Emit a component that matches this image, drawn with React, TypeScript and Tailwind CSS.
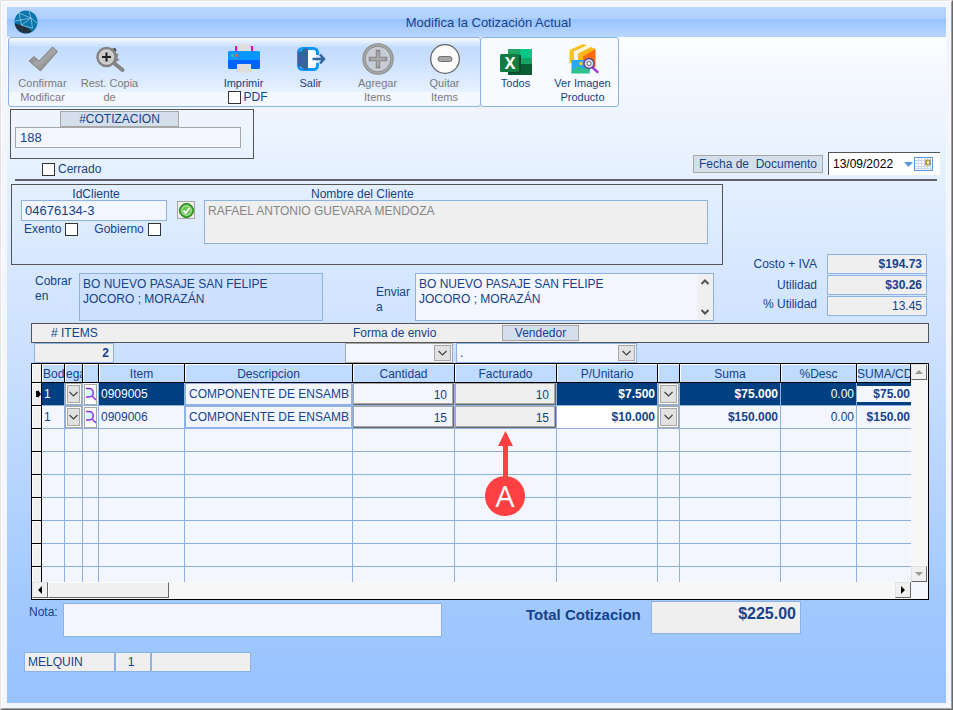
import React from "react";

const field =
  "block rounded-none border border-[#8db2e3] bg-[#f3f6ff] text-[#15428b] outline-none resize-none";
const tag = "border border-[#a7a7a7] bg-[#d5dfec] leading-[14px] text-center";

function Check({ id }: { id: string }) {
  return (
    <input
      id={id}
      type="checkbox"
      className="m-0 size-[13px] shrink-0 appearance-none border border-[#333] bg-white checked:bg-[#15428b]"
    />
  );
}

function DropArrow() {
  return (
    <span className="pointer-events-none absolute inset-y-[2px] right-[2px] flex w-[17px] items-center justify-center border border-[#a7a7a7] bg-[#e1e1e1]">
      <svg width="9" height="6" viewBox="0 0 9 6" fill="none" stroke="#444" strokeWidth="1.2">
        <path d="M.5 1l4 4 4-4" />
      </svg>
    </span>
  );
}

function CellDrop({ label }: { label: string }) {
  return (
    <span className="relative block h-[22px] w-full border border-[#a7a7a7] bg-white">
      <select aria-label={label} className="block size-full appearance-none opacity-0" />
      <span className="pointer-events-none absolute inset-px flex items-center justify-center border border-[#a7a7a7] bg-[#e1e1e1]">
        <svg width="9" height="6" viewBox="0 0 9 6" fill="none" stroke="#444" strokeWidth="1.2">
          <path d="M.5 1l4 4 4-4" />
        </svg>
      </span>
    </span>
  );
}

function Globe() {
  return (
    <svg width="24" height="24" viewBox="0 0 24 24">
      <circle cx="12" cy="12" r="11.5" fill="#0b76ab" />
      <path d="M.7 13.5l6.8 1.7 7 3.2 3.5 3.2A11.5 11.5 0 0 1 .7 13.5z" fill="#26313f" />
      <path
        d="M5 3l12 5L7.500 15.200 5 3M1 11l16-3 6 5M7.500 15.200l11 3L17 8M15 1l2 7"
        fill="none"
        stroke="#8fc3dd"
        strokeWidth=".8"
      />
    </svg>
  );
}

function IconConfirm() {
  return (
    <svg width="32" height="32" viewBox="0 0 32 32">
      <defs>
        <linearGradient id="gc" x1="0" y1="0" x2="1" y2="1">
          <stop offset="0" stopColor="#777" />
          <stop offset=".5" stopColor="#a5a5a5" />
          <stop offset="1" stopColor="#777" />
        </linearGradient>
      </defs>
      <path d="M2 18l5-4.500 5 4.500L25.500 4l5 4.500L13.500 28z" fill="url(#gc)" stroke="#777" strokeWidth=".8" />
    </svg>
  );
}

function IconRestore() {
  return (
    <svg width="32" height="32" viewBox="0 0 32 32">
      <path d="M18 5l3.500 1v4l3 1-1 4 2 2-5 3z" fill="#8b8b8b" />
      <path d="M19.500 5.500l2 1v2" fill="none" stroke="#444" strokeWidth="1.500" />
      <path d="M20.500 20.500l8 6.500" stroke="#858585" strokeWidth="4" strokeLinecap="round" />
      <circle cx="12.500" cy="14" r="9" fill="#d6d6d6" stroke="#838383" strokeWidth="2.500" />
      <circle cx="12.500" cy="14" r="6.500" fill="#c9c9c9" />
      <path d="M12.500 9.500v9M8 14h9" stroke="#222" strokeWidth="2" />
    </svg>
  );
}

function IconPrint() {
  return (
    <svg width="34" height="32" viewBox="0 0 34 32">
      <path d="M8 3h18v9H8z" fill="#ff00c8" />
      <path d="M10 1h11l3 3v8H10z" fill="#dedede" />
      <path d="M2.500 8h29a1.500 1.500 0 0 1 1.500 1.500V17H1V9.500A1.500 1.500 0 0 1 2.500 8z" fill="#0a96ff" />
      <path d="M1 17h32v7.500a1.500 1.500 0 0 1-1.500 1.500h-29A1.500 1.500 0 0 1 1 24.500z" fill="#0064ff" />
      <path d="M10 21h14v9H10z" fill="#dedede" />
      <circle cx="5.500" cy="12.500" r="1.500" fill="#2ec7a0" />
      <circle cx="9.500" cy="12.500" r="1.500" fill="#ff5a3c" />
    </svg>
  );
}

function IconExit() {
  return (
    <svg width="32" height="32" viewBox="0 0 32 32">
      <rect x="3.500" y="5.500" width="19" height="21" rx="4" fill="#fff" stroke="#0a96ff" strokeWidth="3" />
      <path d="M3 9l3-1 3-2.500h4v21H9L6 24l-3-1z" fill="#34669c" />
      <path d="M21 12h4v8h-4z" fill="#d8e8ff" />
      <path d="M17.500 16h11M25 11.500l4 4.500-4 4.500" fill="none" stroke="#34669c" strokeWidth="2.500" />
    </svg>
  );
}

function IconAdd() {
  return (
    <svg width="32" height="32" viewBox="0 0 32 32">
      <circle cx="16" cy="16" r="14" fill="#c6cdd6" stroke="#8d8d8d" strokeWidth="3.500" />
      <circle cx="16" cy="16" r="14" fill="none" stroke="#a9a9a9" strokeWidth="1.500" />
      <path d="M16 9v14M9 16h14" stroke="#868686" strokeWidth="4.500" strokeLinecap="square" />
      <path d="M16 8.500v15M8.500 16h15" stroke="#a9a9a9" strokeWidth="2.500" />
    </svg>
  );
}

function IconRemove() {
  return (
    <svg width="32" height="32" viewBox="0 0 32 32">
      <circle cx="16" cy="16" r="14.300" fill="#fcfcfc" stroke="#666" strokeWidth="1.300" />
      <rect x="9" y="13.500" width="14" height="5" rx="2.500" fill="#a6a6a6" stroke="#707070" />
    </svg>
  );
}

function IconExcel() {
  return (
    <svg width="34" height="32" viewBox="0 0 34 32">
      <path d="M9 6h12v10H9z" fill="#1fa463" />
      <path d="M21 6h12v10H21z" fill="#08c784" />
      <path d="M9 15h12v7H9z" fill="#107c41" />
      <path d="M21 15h12v7H21z" fill="#15a463" />
      <path d="M9 21h24v11H9z" fill="#0a5c33" />
      <rect x="10" y="12" width="12" height="18" fill="#0a4a2a" />
      <rect x="1" y="11" width="19" height="18" rx="1.500" fill="#107c41" />
      <text x="11" y="26" textAnchor="middle" fill="#fff" className="font-['Open_Sans',sans-serif] text-[16px] font-bold">
        X
      </text>
    </svg>
  );
}

function IconImage() {
  return (
    <svg width="32" height="32" viewBox="0 0 32 32">
      <path d="M2.500 7L16 1l4 1.500L7 8.500z" fill="#f6c21c" />
      <path d="M7 8.500L20 2.500l4 1.500L11 10.500z" fill="#fff6dc" />
      <path d="M11 10.500L24 4l4.500 2L16 13z" fill="#f6b90f" />
      <path d="M2.500 7L7 8.500V20H2.500z" fill="#f6c21c" />
      <path d="M7 8.500l4 2V20H7z" fill="#f4f4f4" />
      <path d="M11 10.500l5 2.500v8h-5z" fill="#f6b90f" />
      <path d="M16 13l12.500-7v18L16 26z" fill="#ff6d0a" />
      <rect x="4.500" y="17" width="18" height="13" fill="#27a9f5" />
      <path d="M4.500 28l6.500-5 5 3 6.500-4v8.500h-18z" fill="#2fc08c" />
      <circle cx="14" cy="20.500" r="1.700" fill="#ffc91f" />
      <path d="M25.500 24.500l5 4.500" stroke="#a043d2" strokeWidth="2.500" strokeLinecap="round" />
      <circle cx="22" cy="20.500" r="5" fill="#dcd5f2" stroke="#5d3f8f" strokeWidth="1.300" />
      <circle cx="22" cy="20.500" r="2" fill="#fff" stroke="#666" />
    </svg>
  );
}

function ToolButton({
  icon,
  lines,
  disabled,
  children,
}: {
  icon: React.ReactNode;
  lines: string[];
  disabled?: boolean;
  children?: React.ReactNode;
}) {
  return (
    <div className="flex w-[67px] flex-col items-center">
      <button
        type="button"
        disabled={disabled}
        className="flex w-full flex-col items-center text-[11px] leading-[14px] disabled:text-[#7b7b7b]"
      >
        <span className="mb-px flex h-8 items-center justify-center overflow-visible">{icon}</span>
        {lines.map((l) => (
          <span key={l} className="block whitespace-nowrap">
            {l}
          </span>
        ))}
      </button>
      {children}
    </div>
  );
}

function ScrollButton({ label, path, muted }: { label: string; path: string; muted?: boolean }) {
  return (
    <button
      type="button"
      aria-label={label}
      className="flex size-4 shrink-0 items-center justify-center border border-t-[#e3e3e3] border-l-[#e3e3e3] border-r-[#696969] border-b-[#696969] bg-[#f0f0f0]"
    >
      <svg width="8" height="8" viewBox="0 0 8 8" fill={muted ? "#999" : "#000"}>
        <path d={path} />
      </svg>
    </button>
  );
}

const head = "h-[19px] overflow-hidden border-r border-b border-black bg-[#bfdbff] p-0 pt-px text-center leading-[16px] font-normal shadow-[inset_1px_1px_0_#fff]";
const cell = "relative h-[23px] overflow-hidden border-r border-b border-[#8db2e3] p-0";
const sel = "h-[23px] border-r border-b border-black bg-[#f0f0f0] p-0 shadow-[inset_1px_1px_0_#fff]";

const rows = [
  { bod: "1", item: "0909005", cant: "10", fact: "10", pu: "$7.500", suma: "$75.000", desc: "0.00", cd: "$75.00" },
  { bod: "1", item: "0909006", cant: "15", fact: "15", pu: "$10.000", suma: "$150.000", desc: "0.00", cd: "$150.00" },
];

function Marker() {
  return (
    <div className="absolute inset-x-0 top-[2px] z-10 flex pl-[30px]">
      <svg className="shrink-0" width="40" height="86" viewBox="0 0 40 86">
        <path d="M20.500 0L28 15h-5v32h-5V15h-5z" fill="#ff4042" />
        <circle cx="20" cy="65" r="20" fill="#ff4042" />
        <text x="20" y="76" textAnchor="middle" fill="#fff" className="font-['Open_Sans',sans-serif] text-[30px]">
          A
        </text>
      </svg>
    </div>
  );
}

function ItemsGrid() {
  return (
    <div className="mr-[17px] ml-6 border border-black bg-[#f3f6ff] pr-px">
      <div className="flex">
        <div className="h-[218px] min-w-0 flex-1 overflow-hidden">
          <table className="w-full table-fixed border-separate border-spacing-0">
            <colgroup>
              <col className="w-[10px]" />
              <col className="w-[23px]" />
              <col className="w-[18px]" />
              <col className="w-[16px]" />
              <col className="w-[86px]" />
              <col />
              <col className="w-[102px]" />
              <col className="w-[102px]" />
              <col className="w-[101px]" />
              <col className="w-[22px]" />
              <col className="w-[101px]" />
              <col className="w-[76px]" />
              <col className="w-[54px]" />
            </colgroup>
            <thead>
              <tr className="whitespace-nowrap">
                <th className={`${head} bg-[#f0f0f0]`} />
                <th className={head}><span className="block pl-px text-left">Bod</span></th>
                <th className={head}><span className="block overflow-hidden pl-px text-left">ega</span></th>
                <th className={head} />
                <th className={head}>Item</th>
                <th className={head}>Descripcion</th>
                <th className={head}>Cantidad</th>
                <th className={head}>Facturado</th>
                <th className={head}>P/Unitario</th>
                <th className={head} />
                <th className={head}>Suma</th>
                <th className={head}>%Desc</th>
                <th className={`${head} text-left`}>SUMA/CD</th>
              </tr>
            </thead>
            <tbody>
              {rows.map((r, i) => {
                const dark = i === 0 ? "bg-[#003f80] text-white" : "";
                return (
                  <tr key={r.item} className="whitespace-nowrap">
                    <td className={sel}>
                      {i === 0 && (
                        <svg className="ml-1" width="5" height="8" viewBox="0 0 5 8">
                          <path d="M0 1h2V0l3 4-3 4V7H0z" />
                        </svg>
                      )}
                    </td>
                    <td className={`${cell} ${dark} pl-[2px]`}>{r.bod}</td>
                    <td className={cell}><CellDrop label="Bodega" /></td>
                    <td className={cell}>
                      <button type="button" aria-label="Buscar item" className="mx-auto flex h-[21px] w-[13px] items-center justify-center border border-[#a7a7a7] bg-white">
                        <svg width="10" height="14" viewBox="0 0 10 14" fill="#d4fbff" stroke="#8a2be2" strokeWidth="1.500">
                          <path d="M0 1.500h3a4.200 4.200 0 0 1 0 8.500H0" />
                          <path d="M6 9l4 4" />
                        </svg>
                      </button>
                    </td>
                    <td className={`${cell} ${dark} pl-[2px]`}>{r.item}</td>
                    <td className={cell}>
                      <input
                        aria-label="Descripcion"
                        defaultValue="COMPONENTE DE ENSAMBLE"
                        className="block h-[22px] w-full rounded-none border border-[#8db2e3] bg-[#f3f6ff] pr-px pl-[3px] outline-none"
                      />
                    </td>
                    <td className={cell}>
                      <input
                        aria-label="Cantidad"
                        defaultValue={r.cant}
                        className="block h-[22px] w-full rounded-none border border-t-[#a7a7a7] border-l-[#a7a7a7] border-r-[#696969] border-b-[#696969] bg-[#f3f6ff] pt-px pr-[6px] text-right shadow-[inset_-1px_-1px_0_#a7a7a7] outline-none"
                      />
                    </td>
                    <td className={cell}>
                      <input
                        aria-label="Facturado"
                        readOnly
                        defaultValue={r.fact}
                        className="block h-[22px] w-full rounded-none border border-t-[#a7a7a7] border-l-[#a7a7a7] border-r-[#696969] border-b-[#696969] bg-[#efefef] pt-px pr-[6px] text-right shadow-[inset_-1px_-1px_0_#a7a7a7] outline-none"
                      />
                    </td>
                    <td className={`${cell} ${i === 0 ? dark : "bg-white"} pr-[2px] text-right font-bold`}>{r.pu}</td>
                    <td className={cell}><CellDrop label="Precio" /></td>
                    <td className={`${cell} ${dark} pr-[2px] text-right font-bold`}>{r.suma}</td>
                    <td className={`${cell} ${dark} pr-[2px] text-right`}>{r.desc}</td>
                    <td className={`h-[23px] overflow-hidden border-b border-[#8db2e3] p-0 ${i === 0 ? "bg-[#003f80]" : ""}`}>
                      <b className="block h-4 bg-[#f3f6ff] pr-px text-right leading-4">{r.cd}</b>
                    </td>
                  </tr>
                );
              })}
              {[0, 1, 2, 3, 4, 5, 6].map((n) => (
                <tr key={n}>
                  <td className={sel} />
                  {Array.from({ length: 11 }, (_, c) => (
                    <td key={c} className={n === 0 && c === 6 ? "relative h-[23px] border-r border-b border-[#8db2e3] p-0" : cell}>
                      {n === 0 && c === 6 && <Marker />}
                    </td>
                  ))}
                  <td className="h-[23px] border-b border-[#8db2e3] p-0" />
                </tr>
              ))}
            </tbody>
          </table>
        </div>
        <div className="flex w-4 flex-col justify-between bg-[#f7f7f7]">
          <ScrollButton label="Subir" path="M0 6l4-4 4 4z" muted />
          <ScrollButton label="Bajar" path="M0 2l4 4 4-4z" muted />
        </div>
      </div>
      <div className="mr-4 flex h-[17px] bg-[#f7f7f7]">
        <ScrollButton label="Izquierda" path="M6 0L2 4l4 4z" />
        <div className="h-4 w-[121px] border border-t-white border-l-white border-r-[#696969] border-b-[#696969] bg-[#f0f0f0]" />
        <div className="flex-1" />
        <ScrollButton label="Derecha" path="M2 0l4 4-4 4z" />
      </div>
    </div>
  );
}

export default function App() {
  return (
    <div className="flex min-h-screen flex-col border border-t-[#e3e3e3] border-l-[#e3e3e3] border-r-[#696969] border-b-[#696969] font-['Liberation_Sans',Arial,sans-serif] text-[12px] leading-[15px] text-[#15428b]">
      <div className="flex flex-1 flex-col border border-t-white border-l-white border-r-[#a0a0a0] border-b-[#a0a0a0] bg-[#f3f6ff] p-[5px]">
        <header className="flex h-[30px] items-center bg-[linear-gradient(#b8d7ff,#aed0ff_40%,#98c3ff_41%,#b9d6ff)] px-[7px]">
          <Globe />
          <h1 className="flex-1 text-center text-[13px] font-normal">Modifica la Cotización Actual</h1>
        </header>

        <main className="flex-1 bg-[linear-gradient(#fdfeff,#f4f8ff_6%,#e8f2ff_18%,#d8e8ff_33%,#cfe2ff_44%,#aed0ff_74%,#a2c9ff_84%,#98c3ff)]">
          <div className="flex" role="toolbar">
            <div className="ml-px flex h-[70px] w-[473px] rounded-[3px] border border-[#8db2e3] bg-[linear-gradient(#f6faff,#c2dbff_14%,#c9dfff_30%,#e6f0ff_78%,#f3f7ff_80%)] pt-[5px]">
              <ToolButton icon={<IconConfirm />} lines={["Confirmar", "Modificar"]} disabled />
              <ToolButton icon={<IconRestore />} lines={["Rest. Copia", "de"]} disabled />
              <div className="w-[67px]" />
              <ToolButton icon={<IconPrint />} lines={["Imprimir"]}>
                <div className="ml-2 flex items-center gap-[3px] leading-[15px]">
                  <Check id="pdf" />
                  <label htmlFor="pdf">PDF</label>
                </div>
              </ToolButton>
              <ToolButton icon={<IconExit />} lines={["Salir"]} />
              <ToolButton icon={<IconAdd />} lines={["Agregar", "Items"]} disabled />
              <ToolButton icon={<IconRemove />} lines={["Quitar", "Items"]} disabled />
            </div>
            <div className="-ml-px flex h-[70px] w-[139px] rounded-[3px] border border-[#8db2e3] bg-[#f7faff] pt-[5px] pl-px">
              <ToolButton icon={<IconExcel />} lines={["Todos"]} />
              <ToolButton icon={<IconImage />} lines={["Ver Imagen", "Producto"]} />
            </div>
          </div>

          <div className="flex items-end justify-between pt-[2px] pr-[6px] pl-[3px]">
            <div>
              <div className="h-[50px] w-[244px] border border-[#555] px-1 pt-px">
                <div className="flex w-[208px] justify-center">
                  <label htmlFor="cot" className={`${tag} ml-[1px] w-[119px]`}>
                    #COTIZACION
                  </label>
                </div>
                <input
                  id="cot"
                  defaultValue="188"
                  className="block h-[21px] w-[226px] rounded-none border border-[#a7a7a7] bg-[#f3f6ff] px-1 text-[13px] outline-none"
                />
              </div>
              <div className="mt-px ml-8 flex h-[19px] items-center gap-[3px]">
                <Check id="cerrado" />
                <label htmlFor="cerrado">Cerrado</label>
              </div>
            </div>
            <div className="mb-[4px] flex items-center gap-[5px]">
              <label htmlFor="fecha" className="h-[18px] w-[130px] border border-[#a7a7a7] bg-[#d5dfec] text-center leading-[17px] whitespace-pre">
                Fecha de  Documento
              </label>
              <div className="flex h-[23px] w-[112px] items-center border-t border-l border-[#555] bg-white">
                <input id="fecha" defaultValue="13/09/2022" className="w-[75px] pl-1 text-black outline-none" />
                <button type="button" aria-label="Calendario" className="flex items-center gap-px">
                  <svg width="9" height="5" viewBox="0 0 9 5" fill="#5b98dd">
                    <path d="M0 0h9L4.500 5z" />
                  </svg>
                  <svg width="19" height="14" viewBox="0 0 19 14">
                    <rect x=".5" y=".5" width="18" height="13" fill="#fff" stroke="#5b98dd" />
                    <path d="M4.500 1v12M7.500 1v12M10.500 1v12M13.500 1v12M16.500 1v12M1 3.500h17M1 6.500h17M1 9.500h17M1 11.500h17" stroke="#ccd6ee" />
                    <rect x="12" y="3.500" width="4" height="4" fill="#fff" stroke="#b89b50" strokeWidth="2" />
                  </svg>
                </button>
              </div>
            </div>
          </div>

          <hr className="mr-[9px] ml-2 border-t-2 border-[#606468]" />

          <div className="mt-[3px] flex items-end justify-between pr-[19px] pl-1">
            <div className="w-[712px]">
              <div className="flex h-[81px] border border-[#555] pt-[2px] pl-[9px]">
                <div className="w-[146px]">
                  <label htmlFor="idc" className="block h-[13px] pl-1 text-center leading-[14px]">
                    IdCliente
                  </label>
                  <input id="idc" defaultValue="04676134-3" className={`${field} h-[21px] w-full px-[3px] text-[13px]`} />
                  <div className="mt-px ml-[3px] flex items-center gap-1">
                    <label htmlFor="exento">Exento</label>
                    <Check id="exento" />
                    <label htmlFor="gob" className="ml-3">Gobierno</label>
                    <Check id="gob" />
                  </div>
                </div>
                <button type="button" aria-label="Validar cliente" className="mt-[14px] ml-[10px] flex size-[18px] items-center justify-center border border-[#a7a7a7] bg-[#efefef]">
                  <svg width="15" height="15" viewBox="0 0 15 15">
                    <circle cx="7.500" cy="7.500" r="7" fill="#3fae2a" stroke="#24781a" />
                    <circle cx="7.500" cy="7.500" r="4.800" fill="#6cc552" stroke="#e4f7df" strokeWidth=".8" />
                    <path d="M4.500 7.500l2.200 2.500L10.500 5" fill="none" stroke="#fff" strokeWidth="1.800" />
                  </svg>
                </button>
                <div className="ml-[9px] w-[504px]">
                  <label htmlFor="nom" className="block h-[13px] pl-[107px] leading-[14px]">
                    Nombre del Cliente
                  </label>
                  <textarea
                    id="nom"
                    readOnly
                    defaultValue="RAFAEL ANTONIO GUEVARA MENDOZA"
                    className="block h-11 w-full resize-none border border-[#8db2e3] bg-[#efefef] px-[3px] py-[3px] text-[#868686] outline-none"
                  />
                </div>
              </div>
              <div className="mt-2 flex">
                <label htmlFor="cobrar" className="mt-px ml-6 w-11">
                  Cobrar
                  <br />
                  en
                </label>
                <textarea
                  id="cobrar"
                  defaultValue={"BO NUEVO PASAJE SAN FELIPE\nJOCORO ; MORAZÁN"}
                  className="block h-12 w-[244px] resize-none border border-[#8db2e3] bg-[#cde1ff] px-[3px] py-[3px] outline-none"
                />
                <label htmlFor="enviar" className="mt-3 ml-[53px] w-[39px]">
                  Enviar
                  <br />a
                </label>
                <div className="flex h-12 w-[299px] border border-[#8db2e3] bg-[#f3f6ff]">
                  <textarea
                    id="enviar"
                    defaultValue={"BO NUEVO PASAJE SAN FELIPE\nJOCORO ; MORAZÁN"}
                    className="block flex-1 resize-none overflow-hidden px-[3px] py-[3px] outline-none"
                  />
                  <div className="flex w-4 flex-col items-center justify-between bg-[#efefef] py-1">
                    <svg width="8" height="8" viewBox="0 0 8 8" fill="none" stroke="#555" strokeWidth="2">
                      <path d="M.5 6L4 2.500 7.500 6" />
                    </svg>
                    <svg width="8" height="8" viewBox="0 0 8 8" fill="none" stroke="#555" strokeWidth="2">
                      <path d="M.5 2L4 5.500 7.500 2" />
                    </svg>
                  </div>
                </div>
              </div>
            </div>
            <div className="mb-[5px] grid grid-cols-[auto_100px] items-center gap-x-[10px] gap-y-px text-right">
              <label htmlFor="costo">Costo + IVA</label>
              <input id="costo" readOnly defaultValue="$194.73" className="h-5 w-full border border-[#8db2e3] bg-[#efefef] px-1 text-right font-bold outline-none" />
              <label htmlFor="util">Utilidad</label>
              <input id="util" readOnly defaultValue="$30.26" className="h-5 w-full border border-[#8db2e3] bg-[#efefef] px-1 text-right font-bold outline-none" />
              <label htmlFor="putil" className="mb-1">% Utilidad</label>
              <input id="putil" readOnly defaultValue="13.45" className="h-5 w-full border border-[#8db2e3] bg-[#efefef] px-1 text-right outline-none" />
            </div>
          </div>

          <div className="mt-[2px] mr-[17px] ml-6 flex h-5 items-center border border-[#555] bg-[#efefef]">
            <label htmlFor="nitems" className="ml-[19px] w-[302px]"># ITEMS</label>
            <label htmlFor="envio" className="w-[149px]">Forma de envio</label>
            <label htmlFor="vend" className={`${tag} w-[77px]`}>Vendedor</label>
          </div>
          <div className="ml-[27px] flex h-5">
            <input id="nitems" readOnly defaultValue="2" className="h-5 w-20 border border-[#8db2e3] bg-[#efefef] px-1 text-right font-bold outline-none" />
            <div className="relative ml-[231px] w-[108px]">
              <select id="envio" className="block h-5 w-full appearance-none rounded-none border border-[#a7a7a7] bg-[#f3f6ff] outline-none" />
              <DropArrow />
            </div>
            <div className="relative ml-[3px] w-[181px]">
              <select id="vend" className="block h-5 w-full appearance-none rounded-none border border-[#8db2e3] bg-[#f3f6ff] px-[3px] outline-none">
                <option>.</option>
              </select>
              <DropArrow />
            </div>
          </div>

          <ItemsGrid />

          <div className="flex pt-px pl-[22px]">
            <label htmlFor="nota" className="mt-1 w-[34px]">Nota:</label>
            <textarea id="nota" className={`${field} mt-[2px] h-[34px] w-[379px] px-[3px]`} />
            <label htmlFor="total" className="mt-[5px] ml-[84px] w-[125px] text-[15px] leading-[18px] font-bold">
              Total Cotizacion
            </label>
            <div className="h-[33px] w-[150px] border border-[#8db2e3] bg-[#efefef]">
              <input id="total" readOnly defaultValue="$225.00" className="block h-6 w-full bg-transparent px-1 text-right text-[16px] font-bold outline-none" />
            </div>
          </div>

          <div className="mt-[15px] flex pb-[30px] pl-[17px]">
            <input aria-label="Usuario" readOnly defaultValue="MELQUIN" className="h-5 w-[91px] border border-[#8db2e3] bg-[#efefef] px-[3px] outline-none" />
            <input aria-label="Caja" readOnly defaultValue="1" className="h-5 w-9 border border-[#8db2e3] bg-[#efefef] pr-1 text-center outline-none" />
            <input aria-label="Estado" readOnly className="h-5 w-[100px] border border-[#8db2e3] bg-[#efefef] outline-none" />
          </div>
        </main>
      </div>
    </div>
  );
}
